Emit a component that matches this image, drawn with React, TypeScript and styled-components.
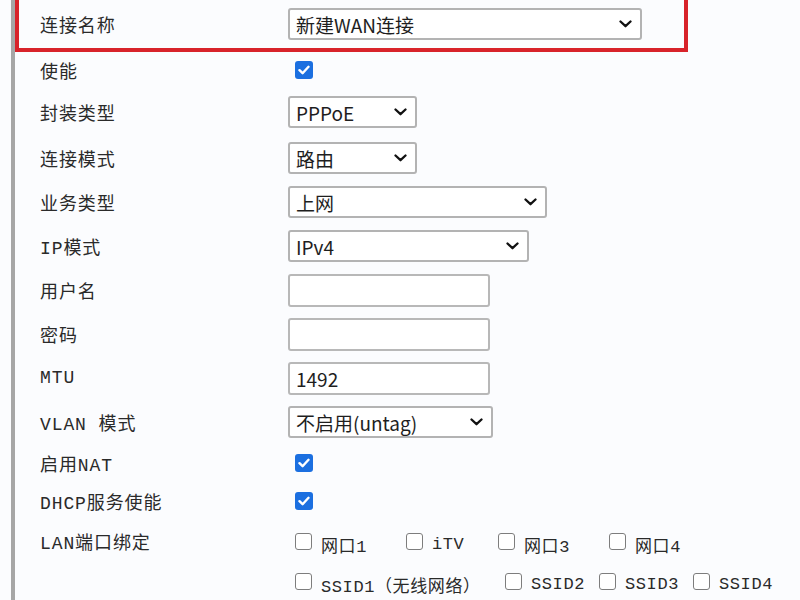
import React from 'react';
import styled, { createGlobalStyle } from 'styled-components';

const GlobalStyle = createGlobalStyle`
    html, body {
        margin: 0;
        padding: 0;
        background: #fbfcfe;
    }
    body {
        font-family: "Noto Sans CJK SC", "Noto Sans", sans-serif;
        color: #2b2b2b;
    }
`;

const Page = styled.div`
    padding-left: 11px;
    height: 600px;
    overflow: hidden;
`;

const Frame = styled.div`
    border-left: 4px solid #a6a6a6;
    height: 100%;
    display: flex;
    flex-direction: column;
`;

const HighlightRow = styled.div`
    box-sizing: border-box;
    width: 673px;
    height: 52px;
    flex: none;
    border: 4px solid #d8232a;
    border-top: 0;
    padding-left: 21px;
    display: grid;
    grid-template-columns: 248px auto;
    align-items: center;
`;

const Row = styled.div<{ $h: number }>`
    height: ${p => p.$h}px;
    flex: none;
    padding-left: 25px;
    display: grid;
    grid-template-columns: 248px auto;
    align-items: center;
`;

const Label = styled.span`
    font-family: "Liberation Mono", "Noto Sans CJK SC", monospace;
    font-size: 18px;
    letter-spacing: 0.9px;
    color: #2a2a2a;
    white-space: pre;
`;

const SelectBox = styled.div<{ $w: number }>`
    box-sizing: border-box;
    width: ${p => p.$w}px;
    height: 32px;
    border: 2px solid #b3b3b3;
    border-radius: 3px;
    background: #fff;
    display: flex;
    align-items: center;
    justify-content: space-between;
    padding: 0 8px 0 6px;
    font-size: 19px;
    color: #1e1e1e;
    white-space: nowrap;
`;

const TextInput = styled.input`
    box-sizing: border-box;
    width: 202px;
    height: 33px;
    border: 2px solid #b8b8b8;
    border-radius: 3px;
    background: #fff;
    padding: 0 6px;
    font-family: "Noto Sans CJK SC", "Noto Sans", sans-serif;
    font-size: 19px;
    color: #1e1e1e;
    outline: none;
`;

const Box = styled.span<{ $on?: boolean }>`
    box-sizing: border-box;
    width: ${p => (p.$on ? 18 : 17)}px;
    height: ${p => (p.$on ? 18 : 17)}px;
    margin-left: 7px;
    border-radius: 3px;
    border: ${p => (p.$on ? '0' : '1.5px solid #7d7d7d')};
    background: ${p => (p.$on ? '#1b6fe0' : '#fff')};
    display: inline-flex;
    align-items: center;
    justify-content: center;
    flex: none;
`;

const Options = styled.div`
    display: flex;
    align-items: center;
`;

const Option = styled.span<{ $w?: number }>`
    display: inline-flex;
    align-items: center;
    gap: 9px;
    width: ${p => (p.$w ? `${p.$w}px` : 'auto')};
    flex: none;
`;

const OptionText = styled(Label)`
    font-size: 17px;
    letter-spacing: 0.6px;
    padding-top: 6px;
`;

function Chevron() {
    return (
        <svg width="13" height="8" viewBox="0 0 13 8">
            <path d="M1.5 1.5 L6.5 6.2 L11.5 1.5" fill="none" stroke="#111" strokeWidth="2.3" strokeLinecap="round" strokeLinejoin="round" />
        </svg>
    );
}

function Select({ w, value }: { w: number; value: string }) {
    return (
        <SelectBox $w={w}>
            <span>{value}</span>
            <Chevron />
        </SelectBox>
    );
}

function Check({ on }: { on?: boolean }) {
    return (
        <Box $on={on}>
            {on && (
                <svg width="12" height="10" viewBox="0 0 12 10">
                    <path d="M1.5 5.2 L4.6 8.2 L10.5 1.8" fill="none" stroke="#fff" strokeWidth="2.4" strokeLinecap="round" strokeLinejoin="round" />
                </svg>
            )}
        </Box>
    );
}

function Opt({ text, w }: { text: string; w?: number }) {
    return (
        <Option $w={w}>
            <Check />
            <OptionText>{text}</OptionText>
        </Option>
    );
}

export default function App() {
    return (
        <>
            <GlobalStyle />
            <Page>
                <Frame>
                    <HighlightRow>
                        <Label>连接名称</Label>
                        <Select w={354} value="新建WAN连接" />
                    </HighlightRow>

                    <Row $h={36}>
                        <Label>使能</Label>
                        <Check on />
                    </Row>
                    <Row $h={48}>
                        <Label>封装类型</Label>
                        <Select w={129} value="PPPoE" />
                    </Row>
                    <Row $h={44}>
                        <Label>连接模式</Label>
                        <Select w={129} value="路由" />
                    </Row>
                    <Row $h={44}>
                        <Label>业务类型</Label>
                        <Select w={259} value="上网" />
                    </Row>
                    <Row $h={44}>
                        <Label>IP模式</Label>
                        <Select w={241} value="IPv4" />
                    </Row>
                    <Row $h={44}>
                        <Label>用户名</Label>
                        <TextInput />
                    </Row>
                    <Row $h={44}>
                        <Label>密码</Label>
                        <TextInput type="password" />
                    </Row>
                    <Row $h={44}>
                        <Label>MTU</Label>
                        <TextInput defaultValue="1492" />
                    </Row>
                    <Row $h={44}>
                        <Label>VLAN 模式</Label>
                        <Select w={205} value="不启用(untag)" />
                    </Row>
                    <Row $h={38}>
                        <Label>启用NAT</Label>
                        <Check on />
                    </Row>
                    <Row $h={38}>
                        <Label>DHCP服务使能</Label>
                        <Check on />
                    </Row>
                    <Row $h={42}>
                        <Label>LAN端口绑定</Label>
                        <Options>
                            <Opt text="网口1" w={111} />
                            <Opt text="iTV" w={92} />
                            <Opt text="网口3" w={111} />
                            <Opt text="网口4" />
                        </Options>
                    </Row>
                    <Row $h={38}>
                        <Label />
                        <Options>
                            <Opt text="SSID1（无线网络）" w={210} />
                            <Opt text="SSID2" w={94} />
                            <Opt text="SSID3" w={94} />
                            <Opt text="SSID4" />
                        </Options>
                    </Row>
                </Frame>
            </Page>
        </>
    );
}
